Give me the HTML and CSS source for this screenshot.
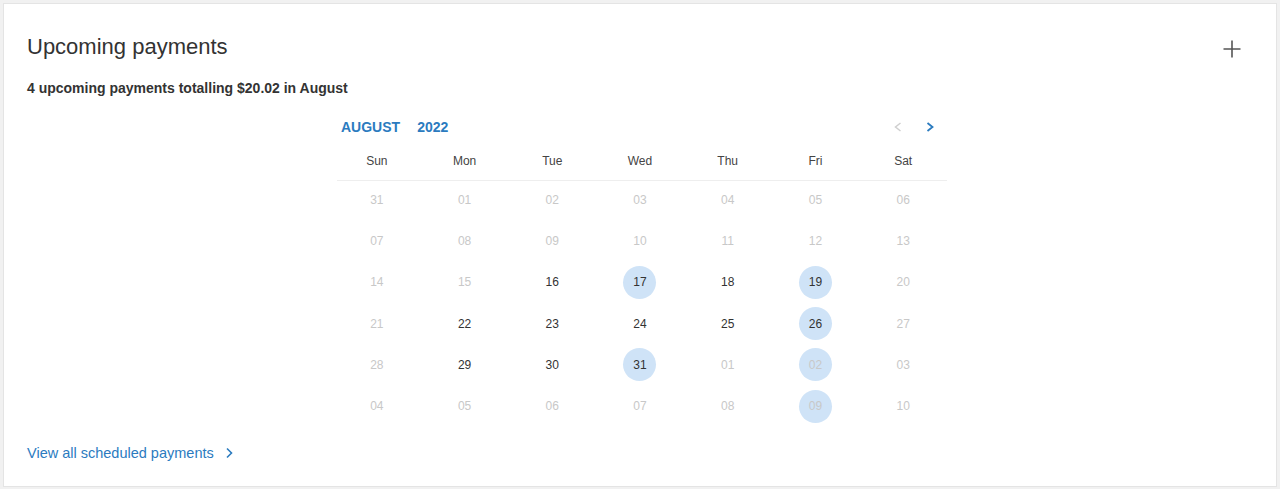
FILE: index.html
```html
<!DOCTYPE html>
<html lang="en">
<head>
<meta charset="utf-8">
<title>Upcoming payments</title>
<link rel="stylesheet" href="styles.css">
</head>
<body>
<section class="card">
  <header class="card-head">
    <h2 class="title">Upcoming payments</h2>
    <button class="add-btn" aria-label="Add payment">
      <svg width="20" height="20" viewBox="0 0 20 20"><path d="M10 1.5V18.5M1.5 10H18.5" stroke="#555" stroke-width="1.6" fill="none"/></svg>
    </button>
  </header>
  <p class="summary">4 upcoming payments totalling $20.02 in August</p>

  <div class="calendar">
    <div class="cal-nav">
      <div class="cal-month"><span>AUGUST</span><span class="cal-year">2022</span></div>
      <div class="cal-arrows">
        <svg class="arrow" width="10" height="12" viewBox="0 0 10 12"><path d="M7.5 2L2.5 6L7.5 10" stroke="#cfcfcf" stroke-width="1.5" fill="none"/></svg>
        <svg class="arrow" width="10" height="12" viewBox="0 0 10 12"><path d="M2.5 2L7.5 6L2.5 10" stroke="#2b7bbf" stroke-width="1.8" fill="none"/></svg>
      </div>
    </div>
    <div class="weekdays">
      <span>Sun</span><span>Mon</span><span>Tue</span><span>Wed</span><span>Thu</span><span>Fri</span><span>Sat</span>
    </div>
    <div class="days">
      <span class="day muted">31</span><span class="day muted">01</span><span class="day muted">02</span><span class="day muted">03</span><span class="day muted">04</span><span class="day muted">05</span><span class="day muted">06</span>
      <span class="day muted">07</span><span class="day muted">08</span><span class="day muted">09</span><span class="day muted">10</span><span class="day muted">11</span><span class="day muted">12</span><span class="day muted">13</span>
      <span class="day muted">14</span><span class="day muted">15</span><span class="day">16</span><span class="day"><b class="dot">17</b></span><span class="day">18</span><span class="day"><b class="dot">19</b></span><span class="day muted">20</span>
      <span class="day muted">21</span><span class="day">22</span><span class="day">23</span><span class="day">24</span><span class="day">25</span><span class="day"><b class="dot">26</b></span><span class="day muted">27</span>
      <span class="day muted">28</span><span class="day">29</span><span class="day">30</span><span class="day"><b class="dot">31</b></span><span class="day muted">01</span><span class="day muted"><b class="dot">02</b></span><span class="day muted">03</span>
      <span class="day muted">04</span><span class="day muted">05</span><span class="day muted">06</span><span class="day muted">07</span><span class="day muted">08</span><span class="day muted"><b class="dot">09</b></span><span class="day muted">10</span>
    </div>
  </div>

  <a class="view-all" href="#">View all scheduled payments
    <svg width="10" height="12" viewBox="0 0 10 12"><path d="M3 1.5L7.5 6L3 10.5" stroke="#2b7bbf" stroke-width="1.6" fill="none"/></svg>
  </a>
</section>
</body>
</html>
```

FILE: styles.css
```css
* { box-sizing: border-box; }

html, body {
  margin: 0;
  padding: 0;
  background: #f1f1f1;
  font-family: "Liberation Sans", Arial, Helvetica, sans-serif;
  color: #333;
}

body {
  padding: 3px 3px 2px 3px;
}

.card {
  background: #fff;
  border: 1px solid #e4e4e4;
  height: 484px;
  padding: 30px 23px 0 23px;
  display: flex;
  flex-direction: column;
}

.card-head {
  display: flex;
  justify-content: space-between;
  align-items: flex-start;
}

.title {
  margin: 0;
  font-size: 22px;
  line-height: 26px;
  font-weight: normal;
  color: #333;
}

.add-btn {
  border: 0;
  background: none;
  padding: 0;
  margin: 5px 11px 0 0;
  width: 20px;
  height: 20px;
  display: flex;
}

.summary {
  margin: 20px 0 0 0;
  font-size: 14px;
  line-height: 16px;
  font-weight: bold;
  color: #333;
}

.calendar {
  width: 614px;
  margin: 19px auto 0 auto;
}

.cal-nav {
  display: flex;
  justify-content: space-between;
  align-items: center;
  height: 24px;
  padding: 0 12px 0 8px;
}

.cal-month {
  display: flex;
  gap: 17px;
  font-size: 14px;
  font-weight: bold;
  color: #2b7bbf;
}

.cal-arrows {
  display: flex;
  gap: 22px;
  align-items: center;
}

.arrow { display: block; }

.weekdays {
  display: grid;
  grid-template-columns: repeat(7, 1fr);
  height: 42px;
  align-items: center;
  background: linear-gradient(#eeeeee, #eeeeee) no-repeat 4px 100% / 610px 1px;
  font-size: 12px;
  color: #444;
  padding: 3px 0 1px 0;
}

.weekdays span {
  text-align: center;
}

.days {
  display: grid;
  grid-template-columns: repeat(7, 1fr);
  grid-auto-rows: 41.2px;
  margin-top: -1.5px;
}

.day {
  display: flex;
  align-items: center;
  justify-content: center;
  font-size: 12px;
  color: #333;
}

.day.muted { color: #c8c8c8; }

.dot {
  width: 33px;
  height: 33px;
  border-radius: 50%;
  background: #cfe3f7;
  display: flex;
  align-items: center;
  justify-content: center;
  font-weight: normal;
}

.view-all {
  margin-top: 17px;
  align-self: flex-start;
  display: flex;
  align-items: center;
  gap: 10px;
  font-size: 14.5px;
  line-height: 18px;
  color: #2b7bbf;
  text-decoration: none;
}
```
